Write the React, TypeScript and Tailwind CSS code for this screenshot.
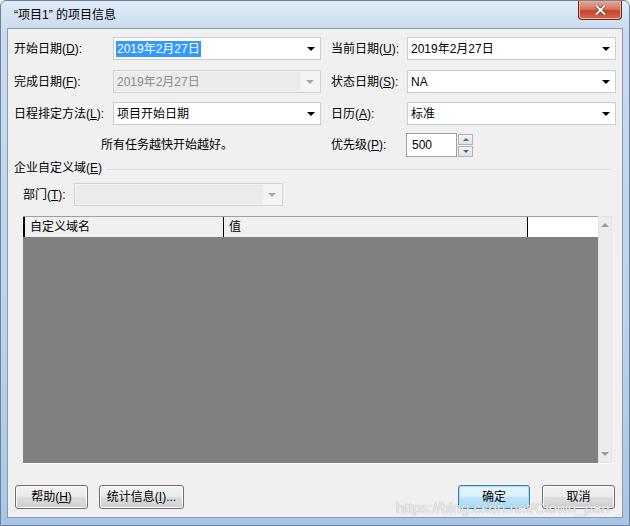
import React from "react";

const font = "font-['Liberation_Sans','Noto_Sans_CJK_SC',sans-serif]";

function Arrow({ disabled }: { disabled?: boolean }) {
  return (
    <span
      className={
        disabled
          ? "ml-auto mr-[5px] h-0 w-0 border-x-[4px] border-t-[4px] border-x-transparent border-t-[#a8a8a8]"
          : "ml-auto mr-[5px] h-0 w-0 border-x-[4px] border-t-[4px] border-x-transparent border-t-black"
      }
    />
  );
}

function Combo({
  value,
  selected,
  disabled,
  className,
}: {
  value?: string;
  selected?: boolean;
  disabled?: boolean;
  className: string;
}) {
  if (disabled) {
    return (
      <div
        className={`flex items-center border border-[#d2d2d2] bg-[#f4f4f4] p-[1px] ${className}`}
      >
        <div className="flex h-full flex-1 items-center bg-[#ebebeb] pl-[2px] text-[#8d8d8d]">
          {value}
        </div>
        <div className="flex h-full w-[18px] items-center">
          <Arrow disabled />
        </div>
      </div>
    );
  }
  return (
    <div
      className={`flex items-center border border-[#c9ccd1] bg-white pl-[2px] ${className}`}
    >
      {selected ? (
        <span className="bg-[#3399ff] px-[1px] leading-[16px] text-white">
          {value}
        </span>
      ) : (
        <span className="pl-[1px]">{value}</span>
      )}
      <Arrow />
    </div>
  );
}

function Label({ text, k, rest = "):" }: { text: string; k: string; rest?: string }) {
  return (
    <span>
      {text}(<u>{k}</u>
      {rest}
    </span>
  );
}

function Btn({
  children,
  primary,
  className,
}: {
  children: React.ReactNode;
  primary?: boolean;
  className: string;
}) {
  return (
    <div
      className={
        primary
          ? `flex h-[24px] items-center justify-center rounded-[3px] border border-[#3c7fb1] bg-[linear-gradient(#eaf6fd_0%,#d9f0fc_50%,#bee6fd_51%,#a7d9f5_100%)] shadow-[inset_0_0_0_1px_#9ddcfb] ${className}`
          : `flex h-[24px] items-center justify-center rounded-[3px] border border-[#707070] bg-[linear-gradient(#f2f2f2_0%,#ebebeb_50%,#dddddd_51%,#cfcfcf_100%)] shadow-[inset_0_0_0_1px_#fcfcfc] ${className}`
      }
    >
      {children}
    </div>
  );
}

export default function App() {
  return (
    <div
      className={`relative flex h-[526px] w-[630px] flex-col overflow-hidden rounded-t-[6px] border border-[#6f8296] bg-[linear-gradient(180deg,#dfeaf6_0%,#c9dbef_6%,#bcd3ec_60%,#a8c6e8_100%)] text-[12px] text-black ${font}`}
    >
      {/* title bar */}
      <div className="flex h-[27px] shrink-0 items-start">
        <div className="pl-[13px] pt-[5px] text-[12px] text-black">
          “项目1” 的项目信息
        </div>
        <div className="ml-auto mr-[7px] flex h-[19px] w-[44px] items-center justify-center rounded-b-[4px] border border-t-0 border-[#6b2a22] bg-[linear-gradient(#e8a493_0%,#d7765f_45%,#c4432d_55%,#d7694e_100%)] shadow-[inset_0_0_0_1px_#eab0a4]">
          <svg width="11" height="10" viewBox="0 0 11 10">
            <path
              d="M1.5 1 L9.5 9 M9.5 1 L1.5 9"
              stroke="#5a1d14"
              strokeWidth="3.2"
              strokeLinecap="square"
            />
            <path
              d="M1.5 1 L9.5 9 M9.5 1 L1.5 9"
              stroke="#ffffff"
              strokeWidth="2"
              strokeLinecap="square"
            />
          </svg>
        </div>
      </div>

      {/* client area */}
      <div className="mx-[6px] mb-[7px] flex flex-1 flex-col border border-[#8a9bae] bg-[#f0f0f0]">
        {/* row 1 */}
        <div className="mt-[8px] flex h-[23px] items-center">
          <div className="w-[105px] pl-[6px]">
            <Label text="开始日期" k="D" />
          </div>
          <Combo value="2019年2月27日" selected className="h-[23px] w-[208px]" />
          <div className="ml-[10px] w-[76px]">
            <Label text="当前日期" k="U" />
          </div>
          <Combo value="2019年2月27日" className="h-[23px] w-[209px]" />
        </div>

        {/* row 2 */}
        <div className="mt-[10px] flex h-[23px] items-center">
          <div className="w-[105px] pl-[6px]">
            <Label text="完成日期" k="F" />
          </div>
          <Combo value="2019年2月27日" disabled className="h-[23px] w-[208px]" />
          <div className="ml-[10px] w-[76px]">
            <Label text="状态日期" k="S" />
          </div>
          <Combo value="NA" className="h-[23px] w-[209px]" />
        </div>

        {/* row 3 */}
        <div className="mt-[9px] flex h-[23px] items-center">
          <div className="w-[105px] pl-[6px]">
            <Label text="日程排定方法" k="L" />
          </div>
          <Combo value="项目开始日期" className="h-[23px] w-[208px]" />
          <div className="ml-[10px] w-[76px]">
            <Label text="日历" k="A" />
          </div>
          <Combo value="标准" className="h-[23px] w-[209px]" />
        </div>

        {/* row 4 */}
        <div className="mt-[8px] flex h-[24px] items-center">
          <div className="w-[313px] pl-[93px]">所有任务越快开始越好。</div>
          <div className="ml-[10px] w-[75px]">
            <Label text="优先级" k="P" />
          </div>
          <div className="flex h-[24px] w-[51px] items-center border border-[#a0a0a0] bg-white pl-[5px]">
            500
          </div>
          <div className="ml-[1px] flex flex-col gap-[1px]">
            <div className="flex h-[11px] w-[15px] items-center justify-center border border-[#b4b4b4] bg-[linear-gradient(#f4f4f4,#e2e2e2)]">
              <span className="h-0 w-0 border-x-[3px] border-b-[3px] border-x-transparent border-b-[#4467a8]" />
            </div>
            <div className="flex h-[11px] w-[15px] items-center justify-center border border-[#b4b4b4] bg-[linear-gradient(#f4f4f4,#e2e2e2)]">
              <span className="h-0 w-0 border-x-[3px] border-t-[3px] border-x-transparent border-t-[#4467a8]" />
            </div>
          </div>
        </div>

        {/* group header */}
        <div className="mt-[4px] flex h-[14px] items-center pl-[6px] pr-[10px]">
          <span>
            企业自定义域(<u>E</u>)
          </span>
          <div className="ml-[5px] mt-[2px] h-px flex-1 bg-[#d5dfe5]" />
        </div>

        {/* department */}
        <div className="mt-[8px] flex h-[23px] items-center">
          <div className="w-[66px] pl-[15px]">
            部门(<u>T</u>):
          </div>
          <Combo disabled className="h-[23px] w-[209px]" />
        </div>

        {/* table */}
        <div className="ml-[15px] mr-[10px] mt-[10px] flex h-[248px] border-b border-[#ffffff]">
          <div className="flex flex-1 flex-col border-t border-[#a0a0a0]">
            <div className="flex h-[20px] shrink-0 items-center">
              <div className="flex h-full w-[200px] items-center border-l-2 border-black pl-[5px]">
                自定义域名
              </div>
              <div className="flex h-full w-[304px] items-center border-l border-black pl-[5px]">
                值
              </div>
              <div className="h-full flex-1 border-l border-black bg-white" />
            </div>
            <div className="flex-1 bg-[#808080]" />
          </div>
          <div className="flex w-[14px] flex-col items-center justify-between border border-[#e3e3e3] bg-[#ececec] py-[6px]">
            <span className="h-0 w-0 border-x-[4px] border-b-[4px] border-x-transparent border-b-[#9a9a9a]" />
            <span className="h-0 w-0 border-x-[4px] border-t-[4px] border-x-transparent border-t-[#9a9a9a]" />
          </div>
        </div>

        {/* buttons */}
        <div className="mt-[21px] flex items-center px-[7px]">
          <Btn className="w-[73px]">
            帮助(<u>H</u>)
          </Btn>
          <Btn className="ml-[11px] w-[85px]">
            统计信息(<u>I</u>)...
          </Btn>
          <Btn primary className="ml-auto w-[72px]">
            确定
          </Btn>
          <Btn className="ml-[12px] w-[73px]">取消</Btn>
        </div>
      </div>

      {/* watermark */}
      <div className="absolute left-[395px] top-[496px] font-['Liberation_Sans',sans-serif] text-[15px] text-white/80 [text-shadow:0_0_1px_#8a8a8a]">
        https://blog.csdn.net/Clown_pan
      </div>
    </div>
  );
}
